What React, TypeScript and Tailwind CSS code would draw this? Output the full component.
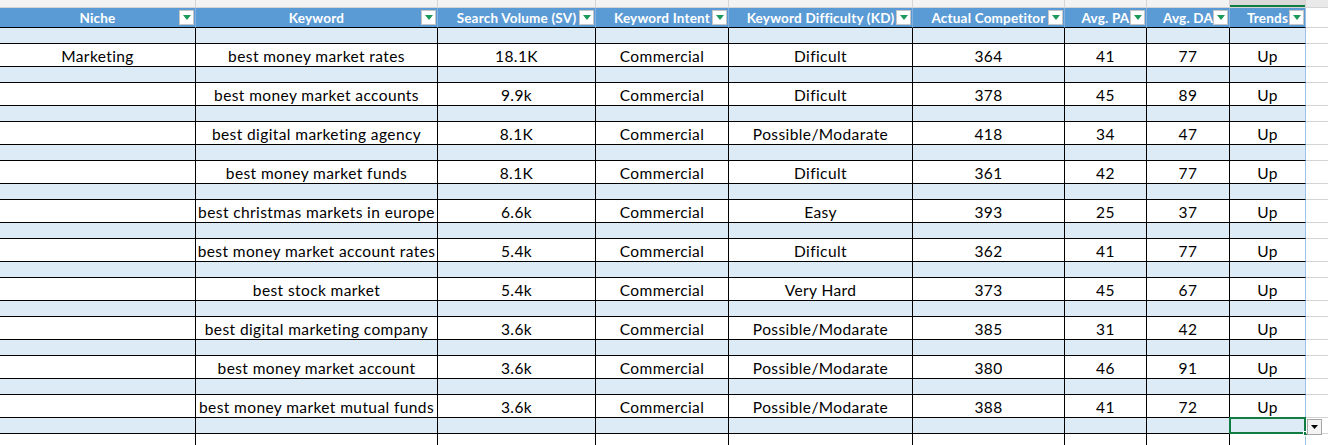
import React from "react";

type Col = { key: string; title: string; w: string; letter: string };

const cols: Col[] = [
  { key: "niche", title: "Niche", w: "w-[196px]", letter: "A" },
  { key: "keyword", title: "Keyword", w: "w-[242px]", letter: "B" },
  { key: "sv", title: "Search Volume (SV)", w: "w-[158px]", letter: "C" },
  { key: "intent", title: "Keyword Intent", w: "w-[133px]", letter: "D" },
  { key: "kd", title: "Keyword Difficulty (KD)", w: "w-[184px]", letter: "E" },
  { key: "comp", title: "Actual Competitor", w: "w-[152px]", letter: "F" },
  { key: "pa", title: "Avg. PA", w: "w-[82px]", letter: "G" },
  { key: "da", title: "Avg. DA", w: "w-[83px]", letter: "H" },
  { key: "trends", title: "Trends", w: "w-[76px]", letter: "I" },
];

const rows: string[][] = [
  ["Marketing", "best money market rates", "18.1K", "Commercial", "Dificult", "364", "41", "77", "Up"],
  ["", "best money market accounts", "9.9k", "Commercial", "Dificult", "378", "45", "89", "Up"],
  ["", "best digital marketing agency", "8.1K", "Commercial", "Possible/Modarate", "418", "34", "47", "Up"],
  ["", "best money market funds", "8.1K", "Commercial", "Dificult", "361", "42", "77", "Up"],
  ["", "best christmas markets in europe", "6.6k", "Commercial", "Easy", "393", "25", "37", "Up"],
  ["", "best money market account rates", "5.4k", "Commercial", "Dificult", "362", "41", "77", "Up"],
  ["", "best stock market", "5.4k", "Commercial", "Very Hard", "373", "45", "67", "Up"],
  ["", "best digital marketing company", "3.6k", "Commercial", "Possible/Modarate", "385", "31", "42", "Up"],
  ["", "best money market account", "3.6k", "Commercial", "Possible/Modarate", "380", "46", "91", "Up"],
  ["", "best money market mutual funds", "3.6k", "Commercial", "Possible/Modarate", "388", "41", "72", "Up"],
];

function FilterButton() {
  return (
    <span className="absolute right-[1px] top-[2px] flex h-[15px] w-[15px] items-center justify-center border border-[#c6c6c6] bg-white">
      <svg width="8" height="5" viewBox="0 0 8 5">
        <path d="M0 0h8L4 5z" fill="#1d9a5b" />
      </svg>
    </span>
  );
}

function SpacerRow({ selected }: { selected?: boolean }) {
  return (
    <div className="flex h-[16px]">
      {cols.map((c, i) => (
        <div
          key={c.key}
          className={`${c.w} relative shrink-0 border-b bg-[#ddebf7] ${
            i === cols.length - 1
              ? "border-r border-b-black border-r-[#9bc2e6]"
              : "border-r border-black"
          }`}
        >
          {selected && i === cols.length - 1 && (
            <>
              <div className="absolute -left-[1px] -right-[1px] -top-[1px] -bottom-[1px] border-2 border-[#107c41]" />
              <div className="absolute -bottom-[3px] -right-[3px] h-[5px] w-[5px] border border-white bg-[#107c41]" />
            </>
          )}
        </div>
      ))}
      <div className="relative w-[22px] shrink-0 border-b border-[#d4d4d4] bg-white">
        {selected && (
          <div className="absolute left-[1px] top-[1px] flex h-[16px] w-[15px] items-center justify-center border border-[#a6a6a6] bg-[#f3f3f3]">
            <svg width="7" height="4" viewBox="0 0 7 4">
              <path d="M0 0h7L3.5 4z" fill="#000" />
            </svg>
          </div>
        )}
      </div>
    </div>
  );
}

function DataRow({ cells }: { cells: string[] }) {
  return (
    <div className="flex h-[23px]">
      {cols.map((c, i) => (
        <div
          key={c.key}
          className={`${c.w} flex shrink-0 items-end justify-center overflow-hidden whitespace-nowrap border-b bg-white ${
            i === cols.length - 1
              ? "border-r border-b-black border-r-[#9bc2e6]"
              : "border-r border-black"
          }`}
        >
          <span className="translate-y-[1px]">{cells[i]}</span>
        </div>
      ))}
      <div className="w-[22px] shrink-0 border-b border-[#d4d4d4] bg-white" />
    </div>
  );
}

export default function App() {
  return (
    <div
      className="h-[445px] w-[1328px] overflow-hidden bg-white text-[15.5px] leading-[21px] tracking-[0.4px] text-black"
      style={{ fontFamily: "Lato, 'Open Sans', sans-serif" }}
    >
      {/* column letters strip */}
      <div className="flex h-[8px] border-b border-[#d4d4d4] bg-[#f3f3f3]">
        {cols.map((c, i) => (
          <div
            key={c.key}
            className={`${c.w} relative flex shrink-0 justify-center overflow-hidden border-r border-[#d4d4d4] ${
              i === cols.length - 1 ? "bg-[#d9d9d9]" : ""
            }`}
          >
            <span className="-mt-[13px] text-[13px] leading-[16px] text-[#444]">{c.letter}</span>
            {i === cols.length - 1 && (
              <div className="absolute bottom-0 left-0 right-0 h-[2px] bg-[#107c41]" />
            )}
          </div>
        ))}
        <div className="flex w-[22px] shrink-0 justify-center overflow-hidden bg-[#e9e9e9]">
          <span className="-mt-[13px] text-[13px] leading-[16px] text-[#444]">J</span>
        </div>
      </div>

      {/* header row */}
      <div className="flex h-[20px]">
        {cols.map((c, i) => (
          <div
            key={c.key}
            className={`${c.w} relative flex shrink-0 items-center justify-center whitespace-nowrap border-b border-r border-b-black bg-[#5b9bd5] pt-[2px] text-[13.5px] font-bold tracking-[0.2px] text-white ${
              i === cols.length - 1 ? "border-r-[#9bc2e6]" : "border-r-[#86b2e0]"
            }`}
          >
            {c.title}
            <FilterButton />
          </div>
        ))}
        <div className="w-[22px] shrink-0 border-b border-[#d4d4d4] bg-white" />
      </div>

      {rows.map((r, idx) => (
        <React.Fragment key={idx}>
          <SpacerRow />
          <DataRow cells={r} />
        </React.Fragment>
      ))}
      <SpacerRow selected />
      <DataRow cells={["", "", "", "", "", "", "", "", ""]} />
    </div>
  );
}
